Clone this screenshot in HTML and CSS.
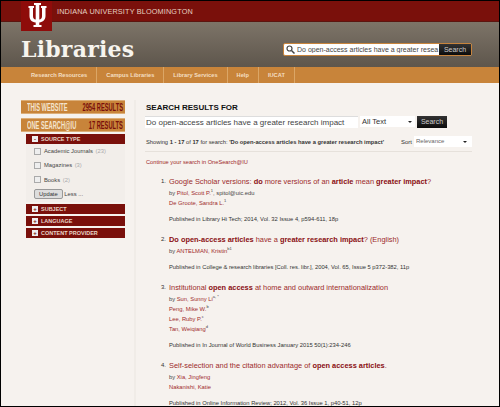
FILE: index.html
```html
<!DOCTYPE html>
<html lang="en">
<head>
    <meta charset="UTF-8">
    <title>Libraries</title>
    <link rel="stylesheet" href="styles.css">
</head>
<body>
<div class="page">

    <!-- Top bar -->
    <div class="topbar">
        <div class="logo">
            <svg width="30" height="30" viewBox="0 0 30 30">
                <path fill="#fff" d="M12 2h7v2h-1.700v14.500c1.800-.3 2.700-1.200 2.700-3.500V7h-1V5h5.500v2h-1v8c0 3.700-2.500 6-6.200 6.500V24h2.200v2h-8v-2h2.200v-2.500C9.500 21 7.500 18.700 7.500 15V7h-1V5H12v2h-1v8c0 2.300.9 3.200 2.700 3.500V4H12z"/>
            </svg>
        </div>
        <div class="topbar-title">INDIANA UNIVERSITY BLOOMINGTON</div>
    </div>

    <!-- Gray header -->
    <div class="header">
        <div class="site-name">Libraries</div>
        <div class="site-search">
            <svg class="lens" width="9" height="9" viewBox="0 0 9 9">
                <circle cx="3.500" cy="3.500" r="2.500" fill="none" stroke="#444" stroke-width="1.200"/>
                <path d="M5.500 5.500L8.500 8.500" stroke="#444" stroke-width="1.500"/>
            </svg>
            <div class="site-search-text">Do open-access articles have a greater resea</div>
            <div class="black-btn">Search</div>
        </div>
    </div>

    <!-- Orange nav -->
    <div class="nav">
        <div class="nav-item first">Research Resources</div>
        <div class="nav-item">Campus Libraries</div>
        <div class="nav-item">Library Services</div>
        <div class="nav-item">Help</div>
        <div class="nav-item">IUCAT</div>
    </div>

    <div class="content">

        <!-- Sidebar -->
        <div class="sidebar">
            <div class="scope">
                <div class="scope-cell"><span class="scope-label">THIS WEBSITE</span></div>
                <div class="scope-cell right"><span class="scope-count">2954 RESULTS</span></div>
            </div>
            <div class="scope">
                <div class="scope-cell"><span class="scope-label">ONE SEARCH@IU</span></div>
                <div class="scope-cell right"><span class="scope-count">17 RESULTS</span></div>
            </div>
            <div class="facets">
                <div class="facet"><span class="toggle">-</span>SOURCE TYPE</div>
                <div class="facet-body">
                    <div class="check-row"><span class="check"></span>Academic Journals <span class="count">(23)</span></div>
                    <div class="check-row"><span class="check"></span>Magazines <span class="count">(3)</span></div>
                    <div class="check-row"><span class="check"></span>Books <span class="count">(2)</span></div>
                    <div class="update-row"><span class="update-btn">Update</span> Less ...</div>
                </div>
                <div class="facet"><span class="toggle">+</span>SUBJECT</div>
                <div class="facet"><span class="toggle">+</span>LANGUAGE</div>
                <div class="facet"><span class="toggle">+</span>CONTENT PROVIDER</div>
            </div>
        </div>

        <!-- Results -->
        <div class="main">
            <div class="results-for">SEARCH RESULTS FOR</div>
            <div class="search-row">
                <div class="query">Do open-access articles have a greater research impact</div>
                <div class="select">All Text<span class="arrow"></span></div>
                <div class="black-btn main-btn">Search</div>
            </div>
            <div class="showing-row">
                <div>Showing <b>1 - 17</b> of <b>17</b> for search: <b>'Do open-access articles have a greater research impact'</b></div>
                <div class="sort"><span>Sort</span><div class="select sort-select">Relevance<span class="arrow"></span></div></div>
            </div>
            <div class="continue">Continue your search in OneSearch@IU</div>

            <div class="result">
                <div class="num">1.</div>
                <div class="result-body">
                    <div class="title">Google Scholar versions: <b>do</b> more versions of an <b>article</b> mean <b>greater impact</b>?</div>
                    <div class="author"><span class="by">by</span> Pitol, Scott P.<sup>1</sup><span class="by">, spitol@uic.edu</span></div>
                    <div class="author">De Groote, Sandra L.<sup>1</sup></div>
                    <div class="pub">Published in Library Hi Tech; 2014, Vol. 32 Issue 4, p594-611, 18p</div>
                </div>
            </div>
            <div class="result">
                <div class="num">2.</div>
                <div class="result-body">
                    <div class="title"><b>Do open-access articles</b> have a <b>greater research impact</b>? (English)</div>
                    <div class="author"><span class="by">by</span> ANTELMAN, Kristin<sup>b1</sup></div>
                    <div class="pub">Published in College &amp; research libraries [Coll. res. libr.], 2004, Vol. 65, Issue 5 p372-382, 11p</div>
                </div>
            </div>
            <div class="result">
                <div class="num">3.</div>
                <div class="result-body">
                    <div class="title">Institutional <b>open access</b> at home and outward internationalization</div>
                    <div class="author"><span class="by">by</span> Sun, Sunny Li<sup>a, *</sup></div>
                    <div class="author">Peng, Mike W.<sup>b</sup></div>
                    <div class="author">Lee, Ruby P.<sup>c</sup></div>
                    <div class="author">Tan, Weiqiang<sup>d</sup></div>
                    <div class="pub">Published in In Journal of World Business January 2015 50(1):234-246</div>
                </div>
            </div>
            <div class="result">
                <div class="num">4.</div>
                <div class="result-body">
                    <div class="title">Self-selection and the citation advantage of <b>open access articles</b>.</div>
                    <div class="author"><span class="by">by</span> Xia, Jingfeng</div>
                    <div class="author">Nakanishi, Katie</div>
                    <div class="pub">Published in Online Information Review; 2012, Vol. 36 Issue 1, p40-51, 12p</div>
                </div>
            </div>
        </div>
    </div>
</div>
</body>
</html>
```

FILE: styles.css
```css
html, body {
    margin: 0;
    padding: 0;
}

body {
    font-family: "Liberation Sans", Arial, sans-serif;
    background-color: #000;
    width: 500px;
    height: 407px;
    overflow: hidden;
}

.page {
    position: relative;
    width: 498px;
    height: 405px;
    margin: 1px 0 0 1px;
    background-color: #f6f2ee;
    overflow: hidden;
}

/* Top bar */
.topbar {
    height: 20px;
    background-color: #7a100b;
    border-bottom: 1px solid #5c1510;
    display: flex;
    align-items: center;
    padding-left: 56px;
}

.topbar-title {
    color: #e6cfc0;
    font-size: 7.300px;
    letter-spacing: 0.02em;
}

.logo {
    position: absolute;
    top: 0;
    left: 20px;
    width: 31px;
    height: 30px;
    background-color: #8e0c0a;
    display: flex;
    justify-content: center;
}

/* Gray header */
.header {
    height: 45px;
    background: linear-gradient(to bottom, #7d7468, #5e564c);
    display: flex;
    justify-content: space-between;
    padding: 15px 0 0 20px;
    box-sizing: border-box;
}

.site-name {
    font-family: "DejaVu Serif", serif;
    font-weight: bold;
    font-size: 22px;
    line-height: 24px;
    color: #f7f4ee;
    letter-spacing: 0.01em;
}

.site-search {
    display: flex;
    align-items: center;
    height: 11px;
    margin: 6px 27px 0 0;
    background-color: #fff;
    border: 1px solid #c8843c;
    border-radius: 2px;
    padding-left: 2px;
}

.lens {
    margin-right: 2px;
}

.site-search-text {
    width: 142px;
    font-size: 7px;
    color: #444;
    white-space: nowrap;
    overflow: hidden;
}

.black-btn {
    background: linear-gradient(to bottom, #333, #0c0c0c);
    color: #ccc;
    font-size: 7px;
    text-align: center;
    width: 32px;
    height: 12px;
    line-height: 12px;
}

.site-search .black-btn {
    height: 11px;
    line-height: 11px;
}

/* Orange nav */
.nav {
    height: 16px;
    background-color: #c8843a;
    display: flex;
}

.nav-item {
    color: #f4dfc2;
    font-size: 5.700px;
    font-weight: bold;
    line-height: 16px;
    padding: 0 9px;
    border-right: 1px solid #dba666;
}

.nav-item.first {
    padding-left: 30px;
}

/* Content columns */
.content {
    display: flex;
}

.sidebar {
    width: 104px;
    margin: 17px 0 0 20px;
    padding-right: 9px;
    border-right: 2px solid #f0ece7;
    flex-shrink: 0;
}

.scope {
    height: 14px;
    background-color: #c8843a;
    border-top: 1px solid #dcae78;
    border-bottom: 1px solid #dcae78;
    box-sizing: border-box;
    margin-bottom: 4px;
    padding: 0 2px 0 6px;
    display: flex;
    justify-content: space-between;
    align-items: center;
    font-weight: bold;
    font-size: 10px;
    color: #f4e4cf;
}

.scope-cell {
    width: 47px;
    display: flex;
    white-space: nowrap;
}

.scope-cell.right {
    justify-content: flex-end;
}

/* no condensed face installed, so squeeze the text */
.scope-label {
    flex: none;
    transform: scaleX(0.57);
    transform-origin: left center;
}

.scope-count {
    flex: none;
    color: #7a100b;
    transform: scaleX(0.57);
    transform-origin: right center;
}

.facets {
    margin: -2px 0 0 5px;
}

.facet {
    height: 10px;
    margin-bottom: 2px;
    background-color: #7a100b;
    color: #e8d6c8;
    font-size: 5.500px;
    font-weight: bold;
    line-height: 10px;
    display: flex;
    align-items: center;
    padding-left: 6px;
}

.toggle {
    width: 6px;
    height: 6px;
    background-color: #eee;
    color: #7a100b;
    font-size: 6px;
    line-height: 6px;
    text-align: center;
    margin-right: 3px;
}

.facet-body {
    margin: -2px 0 2px;
    padding: 0 0 3px 8px;
    background-color: #f2eeea;
    font-size: 5.800px;
    color: #444;
}

.check-row {
    height: 14.300px;
    display: flex;
    align-items: center;
    white-space: pre;
}

.check {
    width: 5px;
    height: 5px;
    background-color: #eee;
    border: 1px solid #aaa;
    margin-right: 3px;
}

.count {
    color: #aaa;
    margin-left: 1px;
}

.update-row {
    margin-top: 2px;
    line-height: 10px;
}

.update-btn {
    display: inline-block;
    padding: 0 4px;
    line-height: 8px;
    background-color: #ddd;
    border: 1px solid #999;
    border-radius: 2px;
    color: #333;
}

/* Results */
.main {
    width: 327px;
    margin: 20px 0 0 9px;
    color: #333;
}

.results-for {
    font-size: 8px;
    font-weight: bold;
    color: #111;
    line-height: 10px;
    padding-left: 1px;
}

.search-row {
    display: flex;
    margin-top: 3px;
    height: 12px;
}

.query {
    width: 213px;
    background-color: #fff;
    border-top: 1px solid #ddd;
    font-size: 8px;
    line-height: 11px;
    padding-left: 1px;
    box-sizing: border-box;
    height: 12px;
    margin-right: 2px;
    color: #444;
}

.select {
    position: relative;
    width: 55px;
    height: 11px;
    background-color: #fff;
    font-size: 7.500px;
    line-height: 11px;
    padding-left: 2px;
    box-sizing: border-box;
    margin-right: 2px;
}

.arrow {
    position: absolute;
    right: 3px;
    top: 5px;
    border-left: 2px solid transparent;
    border-right: 2px solid transparent;
    border-top: 2px solid #222;
}

.main-btn {
    width: 30px;
}

.showing-row {
    display: flex;
    justify-content: space-between;
    align-items: center;
    margin-top: 8px;
    padding: 0 0 4px 1px;
    border-bottom: 1px solid #e6e1db;
    font-size: 5.750px;
    line-height: 10px;
}

.sort {
    display: flex;
    align-items: center;
    font-size: 6px;
}

.sort span {
    margin-right: 2px;
}

.sort-select {
    width: 58px;
    margin-right: 0;
    color: #666;
    font-size: 6px;
}

.continue {
    color: #a12b2b;
    font-size: 5.700px;
    margin: 6px 0 9px 1px;
    line-height: 8px;
}

.result {
    display: flex;
    margin-bottom: 9px;
    white-space: nowrap;
}

.num {
    width: 8px;
    margin-left: 16px;
    font-size: 6px;
    line-height: 13px;
}

.title {
    font-size: 7.400px;
    line-height: 13px;
    color: #9c2a2a;
}

.title b {
    color: #8a0f12;
}

.author {
    font-size: 5.800px;
    line-height: 10px;
    color: #a12b2b;
}

.author sup {
    font-size: 4px;
    line-height: 0;
    color: #444;
}

.by {
    color: #444;
}

.pub {
    font-size: 5.800px;
    line-height: 10px;
    color: #333;
    margin-top: 6px;
}
```
